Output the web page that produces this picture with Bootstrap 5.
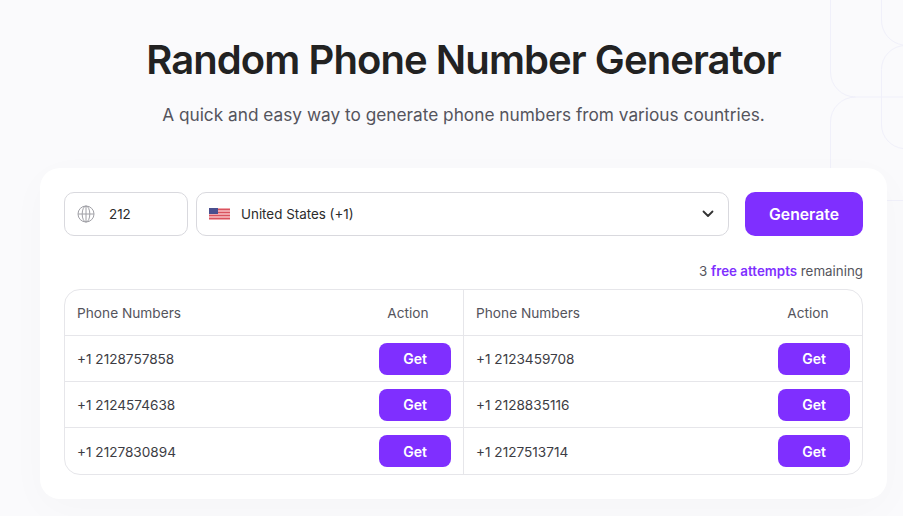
<!DOCTYPE html>
<html lang="en"><head><meta charset="utf-8">
<link href="https://cdn.jsdelivr.net/npm/bootstrap@5.3.0/dist/css/bootstrap.min.css" rel="stylesheet">
<style>
html,body{height:516px;overflow:hidden}
body{background:#fafafc;font-family:Inter,"Liberation Sans",sans-serif;color:#1e1e1e;position:relative}
.deco{position:absolute;top:0;left:0;width:903px;height:516px;pointer-events:none}
.page-wrap{position:relative;padding:0 16px 0 40px;width:903px}
.hero-title{font-size:40px;font-weight:600;letter-spacing:-.92px;color:#222;line-height:48px;margin:0;padding-top:36px;text-align:center}
.hero-sub{font-size:17.25px;color:#54545c;line-height:28px;margin:0;padding-top:17px;text-align:center}
.panel{background:#fff;border-radius:20px;padding:24px;margin-top:39px;height:331px;box-shadow:0 10px 40px rgba(30,30,60,.025)}
.code-box,.country-box{height:44px;border:1px solid #d9d9de;border-radius:10px;font-size:13.4px;color:#2b2b2b;flex:none}
.code-box{width:124px;padding-left:12px;gap:14px}
.country-box{width:533px;padding:0 14px 0 12px;gap:11px}
.gen-btn{width:118px;height:44px;margin-left:8px;padding:1px 0 0;background:#7f2fff;border:0;border-radius:10px;color:#fff;font-weight:600;font-size:15.75px}
.gen-btn:hover,.get-btn:hover{background:#7f2fff;color:#fff}
.attempts{font-size:13.35px;color:#54545c;text-align:right;line-height:20px;margin:25px 0 8px}
.attempts b{color:#7f2fff;font-weight:600}
.num-table{border:1px solid #e6e6ea;border-radius:16px;overflow:hidden}
.half-a{width:399px;border-right:1px solid #e6e6ea}
.half-b{width:398px}
.t-row{height:46px;border-top:1px solid #e6e6ea;padding:0 12px;font-size:13.6px;color:#3c3c44}
.t-row:last-child{height:47px}
.t-row>span:first-child{padding-top:2px}
.t-row.head{height:45px;border-top:0;color:#54545c;font-size:13.7px}
.t-row .act{width:72px;padding:2px 14px 0 0;text-align:center}
.half-b .act{padding-right:12px}
.get-btn{width:72px;height:32px;padding:0;background:#7f2fff;border:0;border-radius:8px;color:#fff;font-weight:600;font-size:14px}
</style></head><body>
<svg class="deco" viewBox="0 0 903 516" fill="none" stroke="#f0f0fa" stroke-width="1">
<path d="M830.5 0V72a25 25 0 0 0 25 25H903"/>
<path d="M881.5 0V20a25 25 0 0 0 21.500 25"/>
<path d="M903 45.500H905a24 24 0 0 0-23.500 24V125a24 24 0 0 0 21.500 23.500"/>
<path d="M830.5 200V122a25 25 0 0 1 25-25"/>
<path d="M830.500 200.500H903"/>
</svg>
<div class="page-wrap">
<h1 class="hero-title">Random Phone Number Generator</h1>
<p class="hero-sub">A quick and easy way to generate phone numbers from various countries.</p>
<div class="panel">
<div class="d-flex gap-2">
<div class="code-box d-flex align-items-center">
<svg width="18" height="18" viewBox="0 0 18 18" fill="none" stroke="#a0a0a6" stroke-width="1"><circle cx="9" cy="9" r="8"/><ellipse cx="9" cy="9" rx="3.800" ry="8"/><path d="M1 9H17M9 1V17"/></svg>
<span>212</span></div>
<div class="country-box d-flex align-items-center">
<svg width="21" height="12" viewBox="0 0 21 12"><rect width="21" height="12" fill="#f0a5ab"/><path d="M0 1.500H21M0 4.500H21M0 7.500H21M0 10.500H21" stroke="#d9535f" stroke-width="1"/><rect width="9" height="6" fill="#4a4f8f"/></svg>
<span class="flex-grow-1">United States (+1)</span>
<svg width="12" height="8" viewBox="0 0 12 8" fill="none" stroke="#333" stroke-width="1.800" stroke-linecap="round" stroke-linejoin="round"><path d="M1.500 1.500 6 6l4.500-4.500"/></svg>
</div>
<button class="btn gen-btn" type="button">Generate</button>
</div>
<p class="attempts">3 <b>free attempts</b> remaining</p>
<div class="num-table d-flex">
<div class="half-a">
<div class="t-row head d-flex align-items-center justify-content-between"><span>Phone Numbers</span><span class="act">Action</span></div>
<div class="t-row d-flex align-items-center justify-content-between"><span>+1 2128757858</span><button class="btn get-btn" type="button">Get</button></div>
<div class="t-row d-flex align-items-center justify-content-between"><span>+1 2124574638</span><button class="btn get-btn" type="button">Get</button></div>
<div class="t-row d-flex align-items-center justify-content-between"><span>+1 2127830894</span><button class="btn get-btn" type="button">Get</button></div>
</div>
<div class="half-b">
<div class="t-row head d-flex align-items-center justify-content-between"><span>Phone Numbers</span><span class="act">Action</span></div>
<div class="t-row d-flex align-items-center justify-content-between"><span>+1 2123459708</span><button class="btn get-btn" type="button">Get</button></div>
<div class="t-row d-flex align-items-center justify-content-between"><span>+1 2128835116</span><button class="btn get-btn" type="button">Get</button></div>
<div class="t-row d-flex align-items-center justify-content-between"><span>+1 2127513714</span><button class="btn get-btn" type="button">Get</button></div>
</div>
</div>
</div>
</div>
</body></html>
